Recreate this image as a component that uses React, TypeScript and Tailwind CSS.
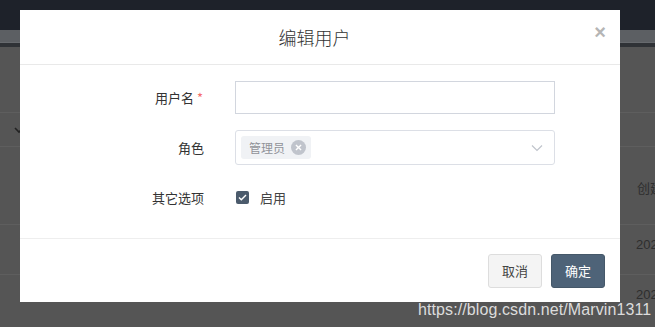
import React from "react";

const cjk = "font-['Noto_Sans_CJK_SC','Noto_Sans',sans-serif]";

function Chevron() {
  return (
    <svg width="12" height="8" viewBox="0 0 12 8" fill="none">
      <path d="M1 1.5l5 5 5-5" stroke="#c0c4cc" strokeWidth="1.2" />
    </svg>
  );
}

export default function App() {
  return (
    <div className={`relative h-[327px] w-[655px] overflow-hidden bg-[#555555] ${cjk}`}>
      {/* page behind the dimmed overlay */}
      <div className="h-[30px] bg-[#1e222a]" />
      <div className="h-[13px] bg-[#5c5f63] border-b border-[#676a6e]" />
      <div className="h-[4px] bg-[#2f3236]" />
      <div className="flex flex-col whitespace-nowrap">
        <div className="h-[66px] border-b border-[#5e5e5e]" />
        <div className="flex h-[34px] items-center border-b border-[#5e5e5e] pl-[14px] text-[#2a2a2a]">
          <svg width="10" height="8" viewBox="0 0 10 8" fill="none">
            <path d="M1 2l4 4 4-4" stroke="#222" strokeWidth="1.6" />
          </svg>
        </div>
        <div className="flex h-[78px] items-center border-b border-[#5e5e5e] pl-[637px] pt-[4px] text-[13px] text-[#2e2e2e]">
          创建
        </div>
        <div className="h-[50px] border-b border-[#5e5e5e] pl-[636px] pt-[11px] text-[13px] leading-[18px] text-[#2e2e2e] font-['Liberation_Sans',sans-serif]">
          2020
        </div>
        <div className="h-[50px] pl-[636px] pt-[11px] text-[13px] leading-[18px] text-[#2e2e2e] font-['Liberation_Sans',sans-serif]">
          2020
        </div>
      </div>

      {/* modal */}
      <div className="absolute left-[20px] top-[10px] w-[600px] bg-white">
        <div className="relative flex h-[55px] items-center justify-center border-b border-[#e9e9e9] pr-[11px]">
          <span className="text-[18px] font-light text-[#333]">编辑用户</span>
          <span className="absolute right-[14px] top-[12px] text-[20px] font-bold leading-none text-[#b5b5b5] font-['Liberation_Sans',sans-serif]">
            ×
          </span>
        </div>

        <div className="flex h-[173px] flex-col pt-[16px] text-[13px] text-[#333]">
          <div className="flex items-center">
            <div className="w-[185px] pr-[2px] text-right">
              用户名<span className="ml-[3px] text-[#f56c6c]">*</span>
            </div>
            <div className="ml-[30px] h-[33px] w-[320px] border border-[#d2d6de]" />
          </div>
          <div className="mt-[16px] flex items-center">
            <div className="w-[185px] pr-[1px] text-right">角色</div>
            <div className="ml-[30px] flex h-[35px] w-[320px] items-center justify-between rounded-[3px] border border-[#dcdfe6] pl-[5px] pr-[11px]">
              <div className="flex h-[23px] w-[70px] items-center gap-[6px] rounded-[3px] bg-[#f0f2f5] pl-[8px] text-[12px] text-[#909399]">
                管理员
                <span className="flex h-[15px] w-[15px] items-center justify-center rounded-full bg-[#c0c4cc]">
                  <svg width="7" height="7" viewBox="0 0 6 6">
                    <path d="M0.8 0.8l4.4 4.4M5.2 0.8L0.8 5.2" stroke="#fff" strokeWidth="1.2" />
                  </svg>
                </span>
              </div>
              <Chevron />
            </div>
          </div>
          <div className="mt-[23px] flex items-center">
            <div className="w-[185px] pr-[1px] text-right">其它选项</div>
            <div className="ml-[31px] flex items-center gap-[11px]">
              <span className="flex h-[13px] w-[13px] items-center justify-center rounded-[2px] bg-[#4b5b6c]">
                <svg width="9" height="7" viewBox="0 0 9 7" fill="none">
                  <path d="M1 3.5l2.3 2.3L8 1" stroke="#fff" strokeWidth="1.4" />
                </svg>
              </span>
              <span className="text-[#444]">启用</span>
            </div>
          </div>
        </div>

        <div className="flex h-[64px] items-start justify-end gap-[9px] border-t border-[#eeeeee] pr-[15px] pt-[15px] text-[13px]">
          <button className="h-[34px] w-[54px] rounded-[3px] border border-[#dddddd] bg-[#f4f4f4] text-[#444]">
            取消
          </button>
          <button className="h-[34px] w-[54px] rounded-[3px] border border-[#455869] bg-[#4e6378] text-white">
            确定
          </button>
        </div>
      </div>

      {/* watermark */}
      <div className="absolute left-[418px] top-[300px] text-[16px] leading-[20px] tracking-[0.1px] text-[#dcdcdc] font-['Liberation_Sans',sans-serif]">
        https://blog.csdn.net/Marvin1311
      </div>
    </div>
  );
}
